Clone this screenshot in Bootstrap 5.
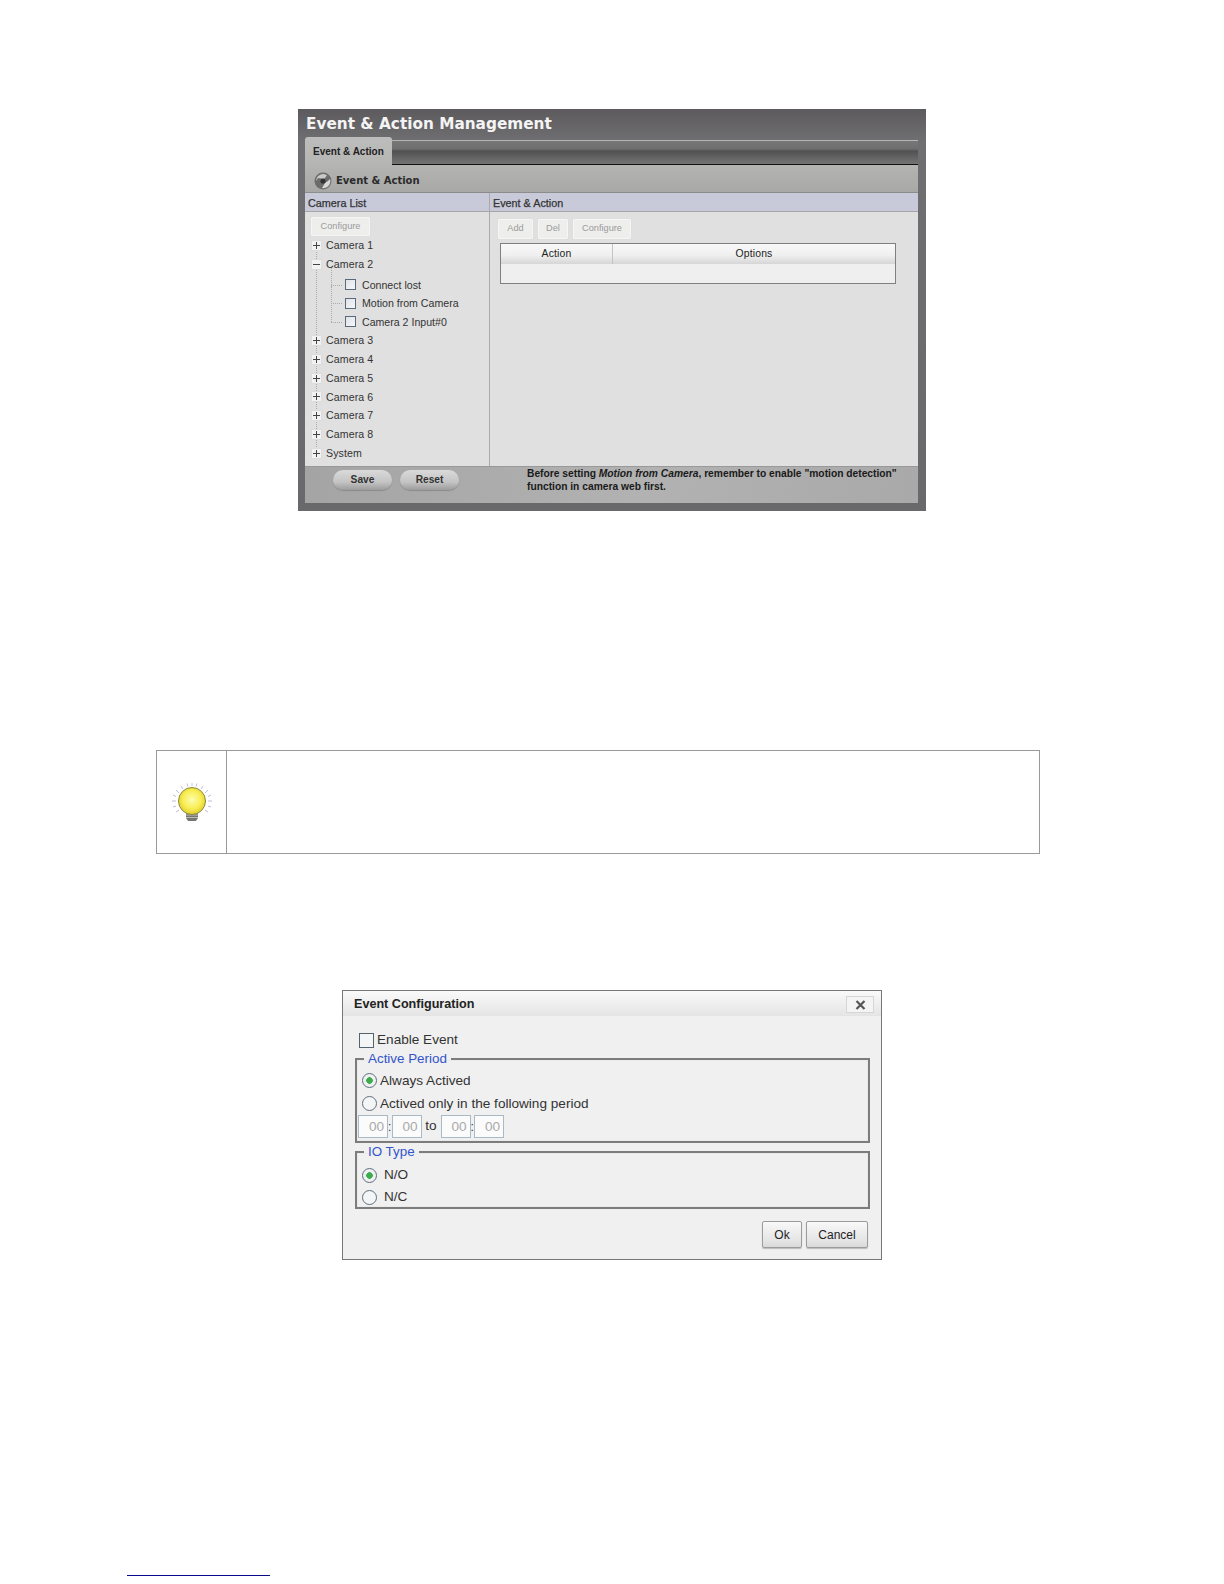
<!doctype html>
<html lang="en"><head><meta charset="utf-8"><title>Event & Action Management</title>
<link rel="stylesheet" href="https://cdn.jsdelivr.net/npm/bootstrap@5.3.0/dist/css/bootstrap.min.css">
<style>
html,body{background:#fff;margin:0}
body{font-family:"Liberation Sans",Arial,sans-serif;color:#222;height:1584px;overflow:hidden}
.pg{padding-top:109px}
/* app screenshot */
.app{width:628px;height:402px;margin-left:298px;padding:0 8px 8px 7px;background:linear-gradient(#5c5a5c,#6f6e70 8%,#69686a 100%);display:flex;flex-direction:column}
.app-title{height:31px;margin:0;padding-left:1px;font:700 15.3px/31px "DejaVu Sans",Verdana,sans-serif;color:#f4f4f4;flex:none}
.tabstrip{height:25px;flex:none;display:flex;background:linear-gradient(#b5b5b5 0,#b5b5b5 1px,#787778 1px,#6f6e6f 9px,#525152 11px,#6b6a6b 20px,#757475 24px,#111 24px,#111 25px)}
.tabitem{width:87px;height:28px;margin-top:-3px;background:linear-gradient(#bdbdbd,#b5b5b3);border-radius:3px 3px 0 0;font:700 10px/29px "Liberation Sans",Arial,sans-serif;color:#222;padding-left:8px;z-index:1}
.band{height:28px;flex:none;background:linear-gradient(#b4b4b2,#a8a8a6);border-bottom:1px solid #8c8c8c;display:flex;align-items:center;padding:4px 0 0 8px;gap:3px;font:700 10px/1 "DejaVu Sans",Verdana,sans-serif;color:#2a2a2a}
.panes{height:274px;flex:none;display:flex;background:#e0e0e0;border-bottom:1px solid #999}
.pane-l{width:185px;border-right:1px solid #a9a9a9;flex:none}
.pane-r{flex:1;min-width:0}
.sub{height:19px;background:#c8cad9;border-bottom:1px solid #a6a6a8;font:400 10.8px/20px "Liberation Sans",Arial,sans-serif;-webkit-text-stroke:.25px #333;color:#333;padding-left:3px}
.pane-r .sub{padding-left:3px}
.gbtn{font:9.2px/1 "Liberation Sans",Arial,sans-serif;color:#9b9b9b;background:#eeeeec;border:1px solid #f6f6f6;border-radius:1px;padding:0;height:20px;box-shadow:0 0 1px #ccc}
.gbtn.w59{width:59px;margin:5px 0 0 6px;display:block;height:19px}
.tools{padding-top:7px;padding-left:8px;gap:5px}
.w36{width:35px}.w30{width:30px}.w58{width:58px}
.grid-box{margin:4px 22px 0 10px;height:41px;border:1px solid #808080;background:#efefef}
.grid-head{height:20px;background:linear-gradient(#f8f8f8,#f0f0f0 55%,#d6d6d6);font:10.4px/20px "Liberation Sans",Arial,sans-serif;color:#222;letter-spacing:.15px;text-align:center}
.gc1{width:112px;border-right:1px solid #c4c4c4;flex:none}.gc2{flex:1}
.tree{position:relative;list-style:none;margin:0;padding:0;height:232px}
.tree::before{content:"";position:absolute;left:11px;top:5px;height:210px;border-left:1px dotted #aaa}
.tree li{height:18.8px;display:flex;align-items:center;position:relative;font:10.6px/1 "Liberation Sans",Arial,sans-serif;color:#333}
.tree .root{padding-left:6px;letter-spacing:.1px}
.tree .tog{width:11px;height:11px;background:#f2f2f2;border:1px solid #dcdcdc;position:relative;margin-right:4px;flex:none;z-index:1}
.tree .tog::before{content:"";position:absolute;left:1px;right:1px;top:4px;height:1px;background:#444}
.tree .tog.plus::after{content:"";position:absolute;top:1px;bottom:1px;left:4px;width:1px;background:#444}
.tree li.leaf{padding-left:40px;height:18.5px}
.tree .leaf1{margin-top:2px}
.tree .leaf::before{content:"";position:absolute;left:26px;top:-8px;bottom:9px;border-left:1px dotted #aaa}
.tree .leaf::after{content:"";position:absolute;left:26px;width:11px;top:9px;border-top:1px dotted #aaa}
.tree .cb{width:11px;height:11px;border:1px solid #5a6a7a;background:linear-gradient(135deg,#dfe3e8,#f6f6f8);margin-right:6px;flex:none}
.foot{height:36px;flex:none;background:linear-gradient(100deg,#a4a4a4,#b2b2b2 55%,#a9a9a9);display:flex}
.foot-btns{width:222px;flex:none;padding:3px 0 0 28px;gap:8px}
.pill{width:59px;height:20px;border-radius:10px;border:0;padding:0;background:linear-gradient(#dadada,#c4c4c4 60%,#9c9c9c);box-shadow:0 1px 1px #8a8a8a;font:700 10.2px/20px "Liberation Sans",Arial,sans-serif;color:#333}
.foot-note{margin:0;font:700 10.26px/13px "Liberation Sans",Arial,sans-serif;color:#1a1a1a}
/* callout */
.tip{margin:239px 0 0 156px;width:884px;height:104px;border:1px solid #9a9a9a}
.tip-ic{width:70px;flex:none;border-right:1px solid #9a9a9a;padding-top:4px}
/* dialog */
.dlg{margin:136px 0 0 342px;width:540px;height:270px;border:1px solid #777;background:#f0f0f0;font-family:"Liberation Sans",Arial,sans-serif;color:#333}
.dlg-head{height:25px;background:linear-gradient(#fafafa,#e4e4e4);padding:0 7px 0 11px;font:700 12.6px/27px "Liberation Sans",Arial,sans-serif;color:#222}
.xbtn{width:28px;height:17px;background:#f4f4f4;border:1px solid #d6d6d6;padding:0;line-height:0;margin-top:5px}
.dlg-body{padding:14px 11px 0 12px;font-size:13.6px}
.dlg .form-check-input{margin:0;flex:none;border-color:#55636f;background-color:#f4f5f7;float:none}
.dlg .form-check-input[type=checkbox]{width:15px;height:15px;border-radius:0}
.dlg .form-check-input[type=radio]{width:15px;height:15px;border:1.4px solid #5e6e7c}
.dlg .form-check-input:checked{background-color:#eef0f2;background-image:radial-gradient(circle,#3dad4b 0,#3dad4b 3px,transparent 3.6px)}
.dlg label{line-height:20px}
.en-row{height:20px;margin-left:4px;gap:3px}
.fs{border:2px solid #7c7c7c;margin:0;padding:0 4px;box-shadow:inset 0 0 1px #bbb;min-width:0}
.fs legend{float:none;width:auto;margin:0 0 0 3px;padding:0 4px;font-size:13.4px;line-height:14px;color:#3355cc}
.fs1{height:91px;margin-top:2px}
.fs2{height:64px;margin-top:2px}
.rw{height:23px;gap:3px;padding-left:1px}
.fs2 .rw{height:22px;gap:7px}
.fs2 .rw:first-of-type{margin-top:5px}
.fs1 .rw:first-of-type{margin-top:3px}
.tm{width:30px;height:23px;border:1px solid #a9bac6;background:#fbfbfb;color:#aaa;font-size:13.6px;line-height:21px;text-align:right;padding:0 3px;border-radius:0;display:block}
.times{gap:0;align-items:center;font-size:13.6px;color:#333;margin-top:0;margin-left:-3px}
.times span{width:3.5px;text-align:center;font-size:12px}
.times .to{width:19px;text-align:center;font-size:13.6px}
.dlg-foot{padding:12px 13px 0 0;gap:4px}
.wbtn{height:27px;background:linear-gradient(#f8f8f8,#e6e6e6 70%,#dadada);border:1px solid #9b9b9b;border-radius:2px;font:12px/1 "Liberation Sans",Arial,sans-serif;color:#222;padding:0;box-shadow:0 1px 1px #bbb}
.rule{margin:315px 0 0 127px;width:143px;height:1px;background:#0a0a8c;opacity:1;border:0}
</style></head>
<body><div class="pg">
<section class="app">
  <h1 class="app-title">Event &amp; Action Management</h1>
  <div class="tabstrip"><div class="tabitem">Event &amp; Action</div></div>
  <div class="band">
    <svg width="20" height="20" viewBox="0 0 20 20" aria-hidden="true"><circle cx="10" cy="10" r="8.5" fill="#6c6c6c"/><path d="M3 10a7 7 0 0 1 11-5.600L11 8 5 7z" fill="#c9c9c9"/><path d="M17 8a7 7 0 0 1-8 9l3-5 3-2z" fill="#d8d8d8"/><circle cx="10" cy="10" r="2.600" fill="#333"/></svg>
    <span>Event &amp; Action</span>
  </div>
  <div class="panes">
    <div class="pane-l">
      <div class="sub">Camera List</div>
      <button class="gbtn w59" type="button">Configure</button>
      <ul class="tree">
        <li class="root"><i class="tog plus"></i>Camera 1</li>
        <li class="root"><i class="tog"></i>Camera 2</li>
        <li class="leaf leaf1"><i class="cb"></i>Connect lost</li>
        <li class="leaf"><i class="cb"></i>Motion from Camera</li>
        <li class="leaf"><i class="cb"></i>Camera 2 Input#0</li>
        <li class="root"><i class="tog plus"></i>Camera 3</li>
        <li class="root"><i class="tog plus"></i>Camera 4</li>
        <li class="root"><i class="tog plus"></i>Camera 5</li>
        <li class="root"><i class="tog plus"></i>Camera 6</li>
        <li class="root"><i class="tog plus"></i>Camera 7</li>
        <li class="root"><i class="tog plus"></i>Camera 8</li>
        <li class="root"><i class="tog plus"></i>System</li>
      </ul>
    </div>
    <div class="pane-r">
      <div class="sub">Event &amp; Action</div>
      <div class="d-flex tools">
        <button class="gbtn w36" type="button">Add</button>
        <button class="gbtn w30" type="button">Del</button>
        <button class="gbtn w58" type="button">Configure</button>
      </div>
      <div class="grid-box">
        <div class="grid-head d-flex"><div class="gc1">Action</div><div class="gc2">Options</div></div>
      </div>
    </div>
  </div>
  <div class="foot">
    <div class="foot-btns d-flex align-items-start">
      <button class="pill" type="button">Save</button>
      <button class="pill" type="button">Reset</button>
    </div>
    <p class="foot-note">Before setting <em>Motion from Camera</em>, remember to enable "motion detection"<br>function in camera web first.</p>
  </div>
</section>

<section class="tip d-flex">
  <div class="tip-ic d-flex align-items-center justify-content-center">
    <svg width="42" height="44" viewBox="0 0 42 44" aria-hidden="true">
      <defs><radialGradient id="bulb" cx=".5" cy=".45" r=".55"><stop offset="0" stop-color="#fdfdb0"/><stop offset=".6" stop-color="#f8ee55"/><stop offset="1" stop-color="#e2ce2c"/></radialGradient></defs>
      <g stroke="#c2bdd6" stroke-width="1" fill="none">
        <path d="M21 1v3M16 1.500l1 3M26 1.500l-1 3M10 4l2 3M32 4l-2 3M5 8l3 3M37 8l-3 3M2 13l3 1.500M40 13l-3 1.500M1 19h4M41 19h-4M2 25l3-1M40 25l-3-1M5 30l3-2M37 30l-3-2"/>
      </g>
      <path d="M15 31h12v5l-2 3h-8l-2-3z" fill="#77776f"/>
      <path d="M15 33h12M15 35.500h12" stroke="#bbb" stroke-width="1"/>
      <circle cx="21" cy="19" r="13.500" fill="url(#bulb)" stroke="#8d8a3a" stroke-width="1"/>
    </svg>
  </div>
  <div class="flex-grow-1"></div>
</section>

<section class="dlg">
  <div class="dlg-head d-flex justify-content-between">
    <span>Event Configuration</span>
    <button class="xbtn" type="button" aria-label="Close"><svg width="11" height="10" viewBox="0 0 11 10"><path d="M1.500 1l8 8M9.500 1l-8 8" stroke="#555" stroke-width="2.200" fill="none"/></svg></button>
  </div>
  <div class="dlg-body">
    <div class="d-flex align-items-center en-row"><input class="form-check-input" type="checkbox" id="en"><label for="en">Enable Event</label></div>
    <fieldset class="fs fs1">
      <legend>Active Period</legend>
      <div class="d-flex align-items-center rw"><input class="form-check-input" type="radio" name="p" id="p1" checked><label for="p1">Always Actived</label></div>
      <div class="d-flex align-items-center rw"><input class="form-check-input" type="radio" name="p" id="p2"><label for="p2">Actived only in the following period</label></div>
      <div class="d-flex times">
        <input class="tm" value="00" aria-label="h"><span>:</span><input class="tm" value="00" aria-label="m"><span class="to">to</span><input class="tm" value="00" aria-label="h"><span>:</span><input class="tm" value="00" aria-label="m">
      </div>
    </fieldset>
    <fieldset class="fs fs2">
      <legend>IO Type</legend>
      <div class="d-flex align-items-center rw"><input class="form-check-input" type="radio" name="t" id="t1" checked><label for="t1">N/O</label></div>
      <div class="d-flex align-items-center rw"><input class="form-check-input" type="radio" name="t" id="t2"><label for="t2">N/C</label></div>
    </fieldset>
  </div>
  <div class="d-flex justify-content-end dlg-foot">
    <button class="wbtn" type="button" style="width:40px">Ok</button>
    <button class="wbtn" type="button" style="width:62px">Cancel</button>
  </div>
</section>
<hr class="rule">
</div>
<script src="https://cdn.jsdelivr.net/npm/bootstrap@5.3.0/dist/js/bootstrap.bundle.min.js"></script>
</body></html>
